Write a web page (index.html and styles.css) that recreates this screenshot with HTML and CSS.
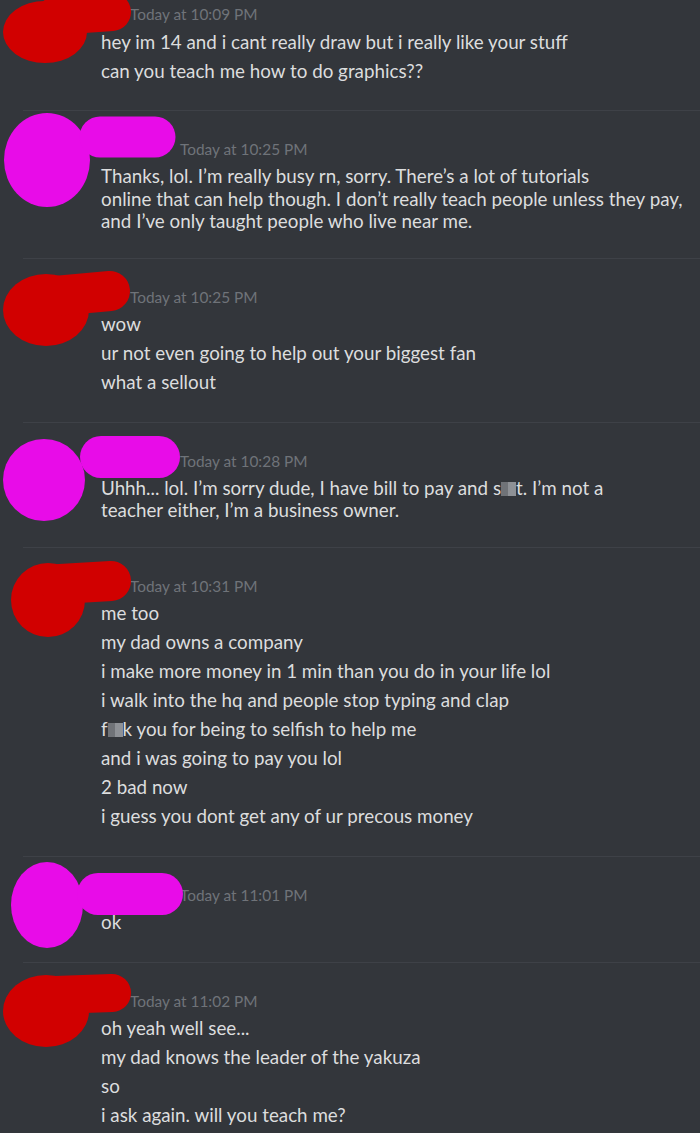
FILE: index.html
```html
<!DOCTYPE html>
<html lang="en">
<head>
  <meta charset="UTF-8" />
  <title>Chat</title>
  <link rel="stylesheet" href="styles.css">
</head>
<body>
  <div class="chat">

    <div class="group first">
      <svg class="scribble" width="200" height="110" viewBox="0 0 200 110">
        <ellipse cx="45" cy="57" rx="42" ry="31" fill="#d10000"/>
        <line x1="55" y1="41" x2="112" y2="37" stroke="#d10000" stroke-width="38" stroke-linecap="round"/>
      </svg>
      <div class="header"><span class="author short"></span><span class="time">Today at 10:09 PM</span></div>
      <div class="msg">hey im 14 and i cant really draw but i really like your stuff</div>
      <div class="msg">can you teach me how to do graphics??</div>
    </div>

    <div class="group">
      <svg class="scribble" width="200" height="110" viewBox="0 0 200 110">
        <ellipse cx="47" cy="50" rx="43" ry="47" fill="#e80ce8"/>
        <line x1="100" y1="27" x2="155" y2="27" stroke="#e80ce8" stroke-width="41" stroke-linecap="round"/>
      </svg>
      <div class="header"><span class="author long"></span><span class="time">Today at 10:25 PM</span></div>
      <div class="msg wrapped">Thanks, lol. I’m really busy rn, sorry. There’s a lot of tutorials<br>online that can help though. I don’t really teach people unless they pay,<br>and I’ve only taught people who live near me.</div>
    </div>

    <div class="group">
      <svg class="scribble" width="200" height="110" viewBox="0 0 200 110">
        <ellipse cx="46" cy="52" rx="43" ry="36" fill="#d10000"/>
        <line x1="55" y1="38" x2="110" y2="33" stroke="#d10000" stroke-width="40" stroke-linecap="round"/>
      </svg>
      <div class="header"><span class="author short"></span><span class="time">Today at 10:25 PM</span></div>
      <div class="msg">wow</div>
      <div class="msg">ur not even going to help out your biggest fan</div>
      <div class="msg">what a sellout</div>
    </div>

    <div class="group">
      <svg class="scribble" width="200" height="110" viewBox="0 0 200 110">
        <ellipse cx="44" cy="58" rx="41" ry="41" fill="#e80ce8"/>
        <line x1="101" y1="35" x2="159" y2="35" stroke="#e80ce8" stroke-width="42" stroke-linecap="round"/>
      </svg>
      <div class="header"><span class="author long"></span><span class="time">Today at 10:28 PM</span></div>
      <div class="msg wrapped">Uhhh... lol. I’m sorry dude, I have bill to pay and s<span class="censor"></span>t. I’m not a<br>teacher either, I’m a business owner.</div>
    </div>

    <div class="group">
      <svg class="scribble" width="200" height="110" viewBox="0 0 200 110">
        <ellipse cx="48" cy="53" rx="37" ry="37" fill="#d10000"/>
        <line x1="60" y1="37" x2="111" y2="34" stroke="#d10000" stroke-width="40" stroke-linecap="round"/>
      </svg>
      <div class="header"><span class="author short"></span><span class="time">Today at 10:31 PM</span></div>
      <div class="msg">me too</div>
      <div class="msg">my dad owns a company</div>
      <div class="msg">i make more money in 1 min than you do in your life lol</div>
      <div class="msg">i walk into the hq and people stop typing and clap</div>
      <div class="msg">f<span class="censor"></span>k you for being to selfish to help me</div>
      <div class="msg">and i was going to pay you lol</div>
      <div class="msg">2 bad now</div>
      <div class="msg">i guess you dont get any of ur precous money</div>
    </div>

    <div class="group">
      <svg class="scribble" width="200" height="110" viewBox="0 0 200 110">
        <ellipse cx="47" cy="49" rx="36" ry="43" fill="#e80ce8"/>
        <line x1="98" y1="38" x2="162" y2="38" stroke="#e80ce8" stroke-width="42" stroke-linecap="round"/>
      </svg>
      <div class="header"><span class="author long"></span><span class="time">Today at 11:01 PM</span></div>
      <div class="msg">ok</div>
    </div>

    <div class="group">
      <svg class="scribble" width="200" height="110" viewBox="0 0 200 110">
        <ellipse cx="46" cy="49" rx="43" ry="36" fill="#d10000"/>
        <line x1="55" y1="33" x2="112" y2="31" stroke="#d10000" stroke-width="38" stroke-linecap="round"/>
      </svg>
      <div class="header"><span class="author short"></span><span class="time">Today at 11:02 PM</span></div>
      <div class="msg">oh yeah well see...</div>
      <div class="msg">my dad knows the leader of the yakuza</div>
      <div class="msg">so</div>
      <div class="msg">i ask again. will you teach me?</div>
    </div>

  </div>
</body>
</html>
```

FILE: styles.css
```css
html, body {
  margin: 0;
  background: #33363b;
}

body {
  font-family: Lato, "Open Sans", sans-serif;
  color: #dcddde;
  overflow: hidden;
  height: 1133px;
}

.chat {
  margin-top: -25px;
}

.group {
  position: relative;
  margin-left: 23px;
  border-top: 1px solid #3e4147;
  padding: 26px 0 25px 78px;
}

.group.first {
  border-top-color: transparent;
}

.scribble {
  position: absolute;
  top: -1px;
  left: -23px;
  overflow: visible;
}

.header {
  height: 24px;
  line-height: 24px;
  margin-bottom: 1px;
  white-space: nowrap;
}

.author {
  display: inline-block;
}

.author.short {
  width: 29px;
}

.author.long {
  width: 79px;
}

.time {
  font-size: 15.4px;
  color: #6f7379;
}

.msg {
  font-size: 18.8px;
  line-height: 20.5px;
  padding: 4.5px 0 4px;
  white-space: nowrap;
}

.msg.wrapped {
  line-height: 22.5px;
  padding: 3px 0 0;
}

.censor {
  display: inline-block;
  width: 15px;
  height: 14px;
  vertical-align: -1px;
  background: linear-gradient(90deg, #707378 0 45%, #8e9196 45% 100%);
}
```
